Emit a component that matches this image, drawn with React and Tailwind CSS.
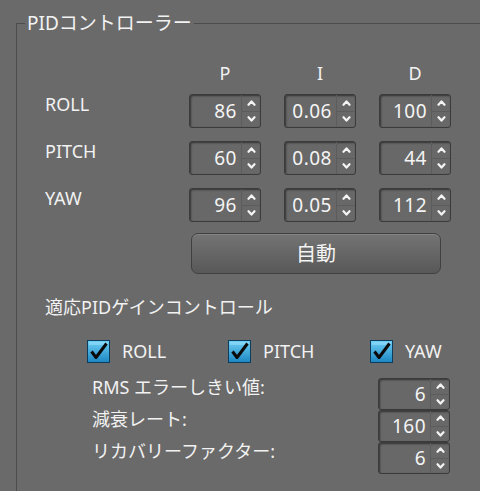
import React from 'react';

const Chevron = ({ down }) => (
    <svg width="9" height="6" viewBox="0 0 9 6" className="block">
        <path
            d={down ? 'M1.5 1.2 L4.5 4.6 L7.5 1.2' : 'M1.5 4.8 L4.5 1.4 L7.5 4.8'}
            fill="none"
            stroke="#f4f4f4"
            strokeWidth="2.2"
            strokeLinecap="round"
            strokeLinejoin="round"
        />
    </svg>
);

const Spinner = ({ value, h = 'h-[34px]' }) => (
    <div
        className={`flex ${h} w-[72px] rounded-[3px] border border-[#3b3b3b] bg-[#686868] shadow-[inset_1px_1px_2px_rgba(0,0,0,0.5)]`}
    >
        <div className="flex flex-1 items-center justify-end pr-[4px] text-[19px] tracking-[0.5px] text-[#f4f4f4]">
            {value}
        </div>
        <div className="flex w-[19px] flex-col border-l border-[#5c5c5c]">
            <div className="flex flex-1 items-center justify-center border-b border-[#5c5c5c]">
                <Chevron />
            </div>
            <div className="flex flex-1 items-center justify-center">
                <Chevron down />
            </div>
        </div>
    </div>
);

const Check = ({ label }) => (
    <div className="flex items-center">
        <svg width="23" height="23" viewBox="0 0 23 23" className="block">
            <defs>
                <linearGradient id="cb" x1="0" y1="0" x2="0" y2="1">
                    <stop offset="0" stopColor="#6fd0f5" />
                    <stop offset="1" stopColor="#1b86c2" />
                </linearGradient>
            </defs>
            <rect x="0.5" y="0.5" width="22" height="22" fill="url(#cb)" stroke="#0d3c5c" />
            <rect x="2" y="2" width="19" height="3" fill="#9ee2fb" opacity="0.5" />
            <path
                d="M4.5 11.5 L9 17.5 L19.5 3.5"
                fill="none"
                stroke="#0a0a0a"
                strokeWidth="3"
                strokeLinejoin="round"
            />
        </svg>
        <span className="ml-[12px] text-[18px] leading-[24px]">{label}</span>
    </div>
);

const pidRows = [
    { name: 'ROLL', p: '86', i: '0.06', d: '100' },
    { name: 'PITCH', p: '60', i: '0.08', d: '44' },
    { name: 'YAW', p: '96', i: '0.05', d: '112' },
];

const adaptiveRows = [
    { name: 'RMS エラーしきい値:', value: '6' },
    { name: '減衰レート:', value: '160' },
    { name: 'リカバリーファクター:', value: '6' },
];

const App = () => {
    return (
        <div className="h-[491px] w-[480px] overflow-hidden bg-[#6a6a6a] font-['Noto_Sans','Noto_Sans_CJK_JP',sans-serif] text-[#f2f2f2]">
            <fieldset className="ml-[16px] mt-[10px] h-[520px] border-l border-t border-[#4c4c4c]">
                <legend className="ml-[8px] px-[2px] text-[19px] leading-[26px]">PIDコントローラー</legend>

                {/* PID table */}
                <div className="grid grid-cols-[121px_72px_72px_72px] gap-x-[23px] pl-[28px] pt-[25px]">
                    <div />
                    <div className="text-center text-[18px] leading-[24px]">P</div>
                    <div className="text-center text-[18px] leading-[24px]">I</div>
                    <div className="text-center text-[18px] leading-[24px]">D</div>
                </div>
                <div className="mt-[9px] grid grid-cols-[121px_72px_72px_72px] gap-x-[23px] gap-y-[13px] pl-[28px]">
                    {pidRows.map((row) => (
                        <React.Fragment key={row.name}>
                            <div className="text-[18px] leading-[20px]">{row.name}</div>
                            <Spinner value={row.p} />
                            <Spinner value={row.i} />
                            <Spinner value={row.d} />
                        </React.Fragment>
                    ))}
                    <button className="col-span-3 col-start-2 ml-[2px] mt-[-2px] h-[41px] w-[250px] rounded-[7px] border border-[#404040] bg-gradient-to-b from-[#747474] to-[#585858] text-[20px] text-[#f4f4f4] shadow-[inset_0_1px_0_rgba(255,255,255,0.12)]">
                        自動
                    </button>
                </div>

                {/* Adaptive gain */}
                <div className="pl-[28px] pt-[21px] text-[18px] leading-[24px]">適応PIDゲインコントロール</div>
                <div className="mt-[20px] flex pl-[70px]">
                    <div className="w-[141px]">
                        <Check label="ROLL" />
                    </div>
                    <div className="w-[142px]">
                        <Check label="PITCH" />
                    </div>
                    <Check label="YAW" />
                </div>
                <div className="mt-[15px] flex flex-col pl-[75px]">
                    {adaptiveRows.map((row) => (
                        <div key={row.name} className="flex w-[358px] items-start justify-between">
                            <div className="text-[18px] leading-[18px]">{row.name}</div>
                            <Spinner value={row.value} h="h-[32px]" />
                        </div>
                    ))}
                </div>
            </fieldset>
        </div>
    );
};

export default App;
